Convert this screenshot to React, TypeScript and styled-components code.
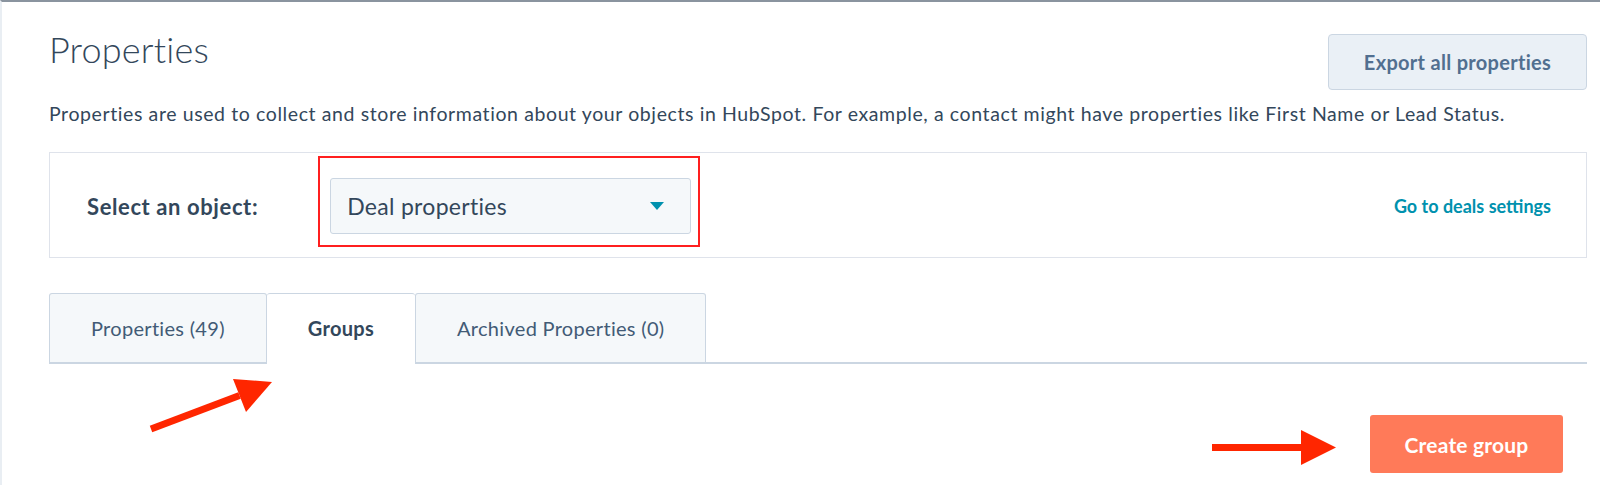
import React from "react";
import styled, { createGlobalStyle } from "styled-components";

const GlobalStyle = createGlobalStyle`
  html, body {
    margin: 0;
    padding: 0;
    background: #ffffff;
  }
  body {
    font-family: Lato, "Open Sans", sans-serif;
    color: #33475b;
  }
`;

const tabs = [
  { label: "Properties (49)", active: false },
  { label: "Groups", active: true },
  { label: "Archived Properties (0)", active: false },
];

const App: React.FC = () => {
  return (
    <>
      <GlobalStyle />
      <Page>
        <Header>
          <Title>Properties</Title>
          <GhostButton>Export all properties</GhostButton>
        </Header>
        <Description>
          Properties are used to collect and store information about your
          objects in HubSpot. For example, a contact might have properties like
          First Name or Lead Status.
        </Description>

        <ObjectPanel>
          <PanelLabel>Select an object:</PanelLabel>
          <SelectWrap>
            <Select>
              <span>Deal properties</span>
              <Caret />
            </Select>
            <Highlight />
          </SelectWrap>
          <Link>Go to deals settings</Link>
        </ObjectPanel>

        <TabRow>
          {tabs.map((t) => (
            <Tab key={t.label} active={t.active}>
              {t.label}
            </Tab>
          ))}
          <TabFiller />
        </TabRow>

        <Actions>
          <PrimaryButton>Create group</PrimaryButton>
        </Actions>

        <ArrowMark style={{ left: 140, top: 365 }} width="140" height="75">
          <line x1="9" y1="62" x2="97.5" y2="28.5" stroke="#ff2600" strokeWidth="7" />
          <polygon points="91,12 130,15 104,45" fill="#ff2600" />
        </ArrowMark>
        <ArrowMark style={{ left: 1200, top: 420 }} width="140" height="50">
          <line x1="10" y1="25.5" x2="100" y2="25.5" stroke="#ff2600" strokeWidth="7" />
          <polygon points="99,8 134,25.5 99,43" fill="#ff2600" />
        </ArrowMark>
      </Page>
    </>
  );
};

export default App;

interface TabProps {
  active: boolean;
}

const Page = styled.div`
  position: relative;
  box-sizing: border-box;
  width: 1600px;
  height: 485px;
  overflow: hidden;
  padding: 26px 13px 0 47px;
  border-top: 2px solid #8a949f;
  border-left: 2px solid #e9eef3;
`;

const Header = styled.div`
  display: flex;
  justify-content: space-between;
  align-items: flex-start;
`;

const Title = styled.h1`
  margin: 0;
  font-size: 36px;
  line-height: 42px;
  font-weight: 300;
  letter-spacing: 0.2px;
  color: #33475b;
`;

const GhostButton = styled.button`
  margin-top: 6px;
  width: 259px;
  height: 56px;
  border: 1px solid #cbd6e2;
  border-radius: 4px;
  background: #eaf0f6;
  color: #516f90;
  font-family: Lato, sans-serif;
  font-size: 20px;
  font-weight: 700;
  letter-spacing: 0.3px;
`;

const Description = styled.p`
  margin: 12px 0 0;
  font-size: 19.5px;
  line-height: 24px;
  letter-spacing: 0.6px;
  color: #33475b;
  white-space: nowrap;
`;

const ObjectPanel = styled.div`
  display: flex;
  align-items: center;
  height: 106px;
  box-sizing: border-box;
  margin-top: 26px;
  padding: 2px 35px 0 37px;
  border: 1px solid #dfe3eb;
`;

const PanelLabel = styled.div`
  font-size: 22px;
  font-weight: 700;
  letter-spacing: 0.6px;
  color: #33475b;
  margin-right: 72px;
`;

const SelectWrap = styled.div`
  position: relative;
`;

const Select = styled.div`
  display: flex;
  align-items: center;
  justify-content: space-between;
  box-sizing: border-box;
  width: 361px;
  height: 56px;
  padding: 0 26px 0 16px;
  background: #f5f8fa;
  border: 1px solid #cbd6e2;
  border-radius: 3px;
  font-size: 23px;
  letter-spacing: 0.3px;
  color: #33475b;
`;

const Caret = styled.span`
  width: 0;
  height: 0;
  border-left: 7px solid transparent;
  border-right: 7px solid transparent;
  border-top: 8px solid #0091ae;
`;

const Highlight = styled.div`
  position: absolute;
  top: -22px;
  left: -12px;
  right: -9px;
  bottom: -13px;
  border: 2px solid #ff1f1f;
  pointer-events: none;
`;

const Link = styled.a`
  margin-left: auto;
  font-size: 18px;
  font-weight: 700;
  color: #0091ae;
`;

const TabRow = styled.div`
  display: flex;
  margin-top: 35px;
  height: 71px;
`;

const Tab = styled.div<TabProps>`
  display: flex;
  align-items: center;
  justify-content: center;
  box-sizing: border-box;
  padding: 0 41px;
  border: 1px solid #cbd6e2;
  border-left-width: ${(p) => (p.active ? "0" : "1px")};
  border-right-width: ${(p) => (p.active ? "0" : "1px")};
  border-bottom: 2px solid ${(p) => (p.active ? "transparent" : "#cbd6e2")};
  border-radius: 3px 3px 0 0;
  background: ${(p) => (p.active ? "#ffffff" : "#f5f8fa")};
  font-size: 20px;
  letter-spacing: 0.3px;
  font-weight: ${(p) => (p.active ? 700 : 400)};
  color: ${(p) => (p.active ? "#33475b" : "#425b76")};
`;

const TabFiller = styled.div`
  flex: 1;
  border-bottom: 2px solid #cbd6e2;
`;

const Actions = styled.div`
  display: flex;
  justify-content: flex-end;
  margin-top: 51px;
  padding-right: 24px;
`;

const PrimaryButton = styled.button`
  width: 193px;
  height: 58px;
  border: none;
  border-radius: 3px;
  background: #ff7a59;
  color: #ffffff;
  font-family: Lato, sans-serif;
  font-size: 21px;
  font-weight: 700;
  letter-spacing: 0.2px;
`;

const ArrowMark = styled.svg`
  position: absolute;
  overflow: visible;
`;
